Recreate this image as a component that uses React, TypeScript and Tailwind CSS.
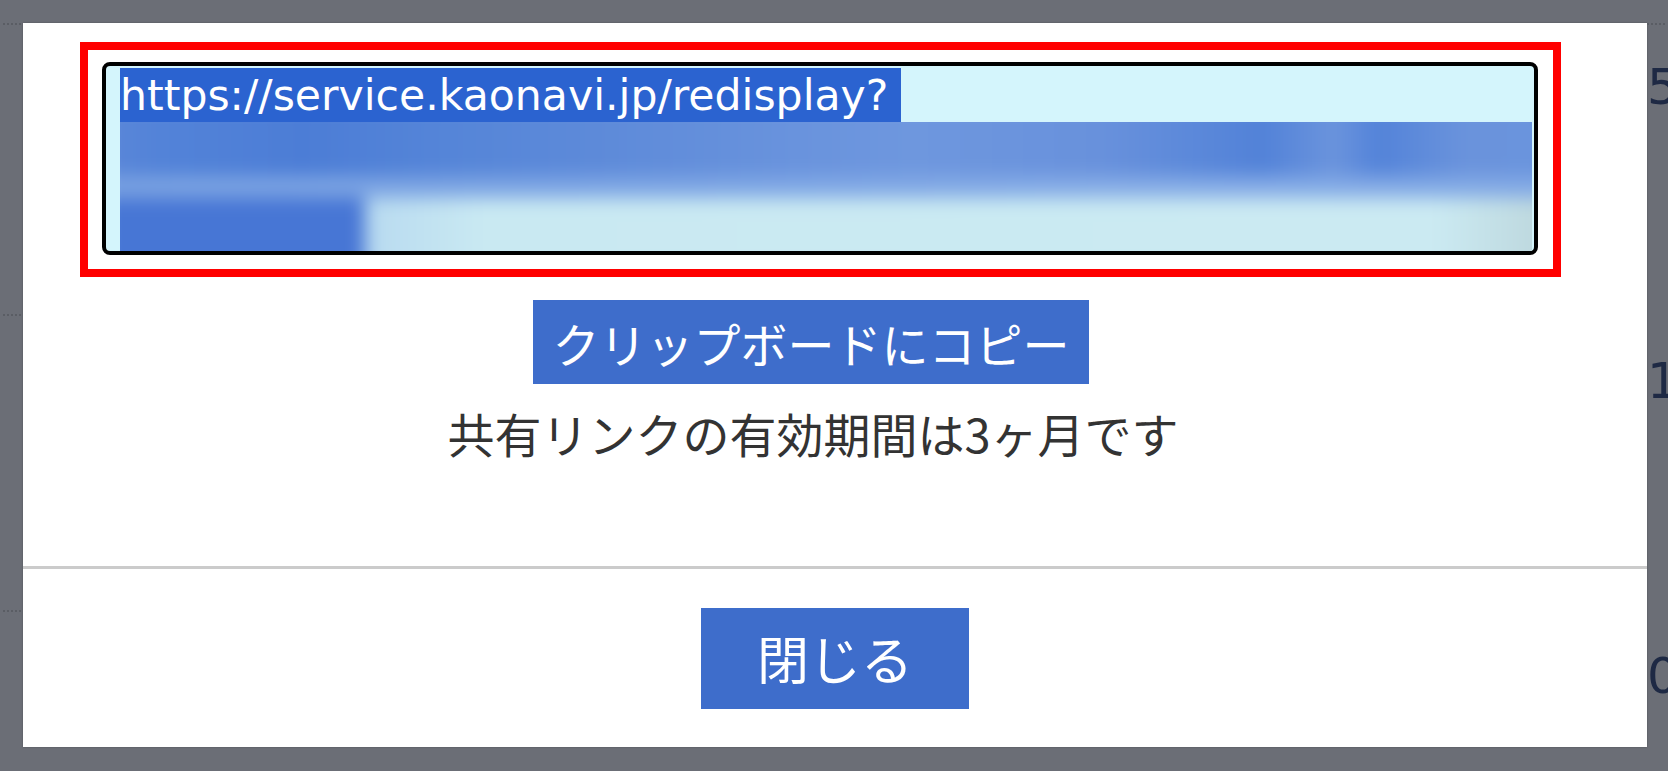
import React from 'react'

const JP = "font-['Noto_Sans_CJK_JP','Noto_Sans',sans-serif]"

function LinkBox() {
  return (
    <div className="w-[1481px] border-[8px] border-[#ff0000] pt-[12px] pb-[14px] pl-[14px] pr-[15px]">
      <div className="h-[193px] w-[1436px] overflow-hidden rounded-[8px] border-[4px] border-black bg-[#d4f5fc] pt-[2px] pl-[14px] pr-[3px]">
        {/* first line, selected */}
        <div className="h-[54px] font-['DejaVu_Sans',sans-serif] text-[42.6px] leading-[54px] text-white">
          <span className="inline-block h-[54px] bg-[#2b63d0] pr-[13px]">https://service.kaonavi.jp/redisplay?</span>
        </div>
        {/* rest of the link, blurred in the original */}
        <div className="h-[129px] w-[1412px] overflow-hidden">
          <div className="-mt-[20px] -ml-[20px] w-[1452px] blur-[9px]">
            <div className="h-[74px] bg-[linear-gradient(90deg,#5b87d8_0%,#5383d8_4%,#4c7dd6_14%,#5585d8_24%,#5d8ad9_34%,#6993dd_48%,#6e97de_56%,#6891dc_69%,#5282d8_80%,#6b94dd_85%,#5383d9_88%,#6a93dc_94%,#6a94dd_100%)]" />
            <div className="h-[22px] bg-[linear-gradient(90deg,#7aa2e2_0%,#7ea6e4_40%,#86ace6_70%,#82a9e5_100%)]" />
            <div className="flex h-[75px]">
              <div className="w-[265px] bg-[#4776d5]" />
              <div className="flex-1 bg-[linear-gradient(90deg,#b8daf0_0%,#c9e9f2_10%,#cbeaf2_90%,#bcd6dc_100%)]" />
            </div>
          </div>
        </div>
      </div>
    </div>
  )
}

function Dots({ className }: { className: string }) {
  return <div className={`h-0 border-t-[2px] border-dotted border-[#5a5d64] ${className}`} />
}

export default function App() {
  return (
    <div className="flex h-[771px] w-[1668px] overflow-hidden bg-[#6b6e76]">
      {/* left edge of the page behind the dialog */}
      <div className="w-[23px] shrink-0">
        <Dots className="mt-[23px] ml-[3px] w-[18px]" />
        <Dots className="mt-[289px] ml-[3px] w-[18px]" />
        <Dots className="mt-[294px] ml-[3px] w-[18px]" />
      </div>

      <div className="shrink-0 pt-[23px]">
        <div className="flex h-[724px] w-[1624px] flex-col bg-white shadow-[0_0_2px_rgba(0,0,0,0.25)]">
          <div className="flex h-[543px] flex-col pt-[19px] pl-[57px]">
            <LinkBox />
            <div className="flex w-[1481px] justify-center">
              <button className={`mt-[23px] mr-[19px] flex h-[84px] w-[556px] items-center justify-center bg-[#3e6dcb] text-[47px] leading-none text-white ${JP}`}>
                クリップボードにコピー
              </button>
            </div>
            <div className="flex w-[1481px] justify-center">
              <p className={`mt-[19px] mr-[15px] text-[47px] leading-[60px] text-[#333333] ${JP}`}>
                共有リンクの有効期間は3ヶ月です
              </p>
            </div>
          </div>
          <div className="h-[3px] bg-[#cbcbcb]" />
          <div className="flex flex-1 items-center justify-center">
            <button className={`flex h-[101px] w-[268px] items-center justify-center bg-[#3e6dcb] text-[52px] leading-none text-white ${JP}`}>
              閉じる
            </button>
          </div>
        </div>
      </div>

      {/* axis labels of the chart behind, cut off by the window */}
      <div className="flex-1 font-['DejaVu_Sans',sans-serif] text-[50px] leading-[50px] text-[#1e2944]">
        <Dots className="mt-[23px] w-[18px]" />
        <div className="mt-[37px]">5</div>
        <div className="mt-[244px]">1</div>
        <div className="mt-[245px]">0</div>
      </div>
    </div>
  )
}
